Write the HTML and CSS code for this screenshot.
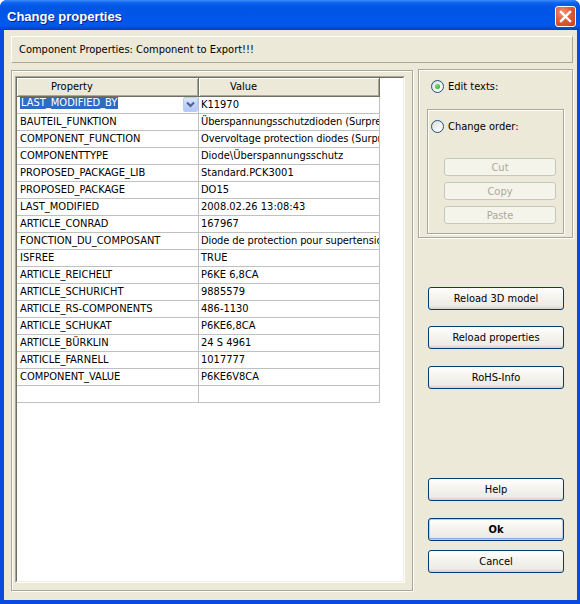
FILE: index.html
```html
<!DOCTYPE html>
<html>
<head>
<meta charset="utf-8">
<title>Change properties</title>
<link rel="stylesheet" href="styles.css">
</head>
<body>
<div class="window">
  <div class="titlebar">
    <span class="title">Change properties</span>
    <div class="close">
      <svg width="13" height="13" viewBox="0 0 13 13"><path d="M2 2 L11 11 M11 2 L2 11" stroke="#fff" stroke-width="2.4" stroke-linecap="square"/></svg>
    </div>
  </div>
  <div class="client">
    <div class="caption-panel">Component Properties: Component to Export!!!</div>
    <div class="main">
      <div class="grid-frame">
        <div class="grid">
          <div class="grid-inner">
            <div class="row head">
              <div class="hcell prop">Property</div>
              <div class="hcell val">Value</div>
            </div>
            <div class="row">
              <div class="cell editing">
                <span class="sel">LAST_MODIFIED_BY</span>
                <span class="drop"><svg width="9" height="7" viewBox="0 0 9 7"><path d="M1 1.5 L4.5 5 L8 1.5" fill="none" stroke="#4D6185" stroke-width="2"/></svg></span>
              </div>
              <div class="cell v">K11970</div>
            </div>
            <div class="row"><div class="cell">BAUTEIL_FUNKTION</div><div class="cell v tight">Überspannungsschutzdioden (Surpres</div></div>
            <div class="row"><div class="cell">COMPONENT_FUNCTION</div><div class="cell v tight">Overvoltage protection diodes (Surpre</div></div>
            <div class="row"><div class="cell">COMPONENTTYPE</div><div class="cell v">Diode\Überspannungsschutz</div></div>
            <div class="row"><div class="cell">PROPOSED_PACKAGE_LIB</div><div class="cell v">Standard.PCK3001</div></div>
            <div class="row"><div class="cell">PROPOSED_PACKAGE</div><div class="cell v">DO15</div></div>
            <div class="row"><div class="cell">LAST_MODIFIED</div><div class="cell v">2008.02.26 13:08:43</div></div>
            <div class="row"><div class="cell">ARTICLE_CONRAD</div><div class="cell v">167967</div></div>
            <div class="row"><div class="cell">FONCTION_DU_COMPOSANT</div><div class="cell v tight">Diode de protection pour supertensior</div></div>
            <div class="row"><div class="cell">ISFREE</div><div class="cell v">TRUE</div></div>
            <div class="row"><div class="cell">ARTICLE_REICHELT</div><div class="cell v">P6KE 6,8CA</div></div>
            <div class="row"><div class="cell">ARTICLE_SCHURICHT</div><div class="cell v">9885579</div></div>
            <div class="row"><div class="cell">ARTICLE_RS-COMPONENTS</div><div class="cell v">486-1130</div></div>
            <div class="row"><div class="cell">ARTICLE_SCHUKAT</div><div class="cell v">P6KE6,8CA</div></div>
            <div class="row"><div class="cell">ARTICLE_BÜRKLIN</div><div class="cell v">24 S 4961</div></div>
            <div class="row"><div class="cell">ARTICLE_FARNELL</div><div class="cell v">1017777</div></div>
            <div class="row"><div class="cell">COMPONENT_VALUE</div><div class="cell v">P6KE6V8CA</div></div>
            <div class="row"><div class="cell"></div><div class="cell v"></div></div>
          </div>
        </div>
      </div>
      <div class="side">
        <div class="mode-group">
          <div class="radio first"><span class="knob checked"></span><span>Edit texts:</span></div>
          <div class="order-group">
            <div class="radio"><span class="knob"></span><span>Change order:</span></div>
            <div class="sbtn first-s">Cut</div>
            <div class="sbtn">Copy</div>
            <div class="sbtn">Paste</div>
          </div>
        </div>
        <button class="btn b-reload3d">Reload 3D model</button>
        <button class="btn b-reloadprops">Reload properties</button>
        <button class="btn b-rohs">RoHS-Info</button>
        <button class="btn b-help">Help</button>
        <button class="btn b-ok">Ok</button>
        <button class="btn b-cancel">Cancel</button>
      </div>
    </div>
  </div>
</div>
</body>
</html>
```
FILE: styles.css
```css
* { box-sizing: border-box; }
html, body { margin: 0; padding: 0; background: #ffffff; }
body {
  width: 580px;
  height: 604px;
  overflow: hidden;
  font-family: "DejaVu Sans Condensed", "Liberation Sans", sans-serif;
  font-size: 11px;
  color: #000;
}
.window {
  width: 580px;
  height: 604px;
  display: flex;
  flex-direction: column;
  background: #0A4BDF;
  border-radius: 7px 7px 0 0;
  overflow: hidden;
}
.titlebar {
  height: 30px;
  flex: none;
  display: flex;
  align-items: center;
  justify-content: space-between;
  padding: 0 4px 0 7px;
  background: linear-gradient(180deg, #3D8DF8 0, #0A61F0 3px, #0055E5 7px, #0056E8 50%, #0059EC 85%, #0047CC 96%, #003EB8 100%);
}
.title {
  color: #fff;
  font-family: "Liberation Sans", sans-serif;
  font-weight: bold;
  font-size: 13px;
  margin-top: 2px;
  text-shadow: 1px 1px #0A1E8C;
}
.close {
  width: 21px;
  height: 21px;
  margin-top: 2px;
  border: 1px solid #fff;
  border-radius: 3px;
  background: radial-gradient(circle at 35% 30%, #F0987A 0, #E35A35 45%, #C93E1B 100%);
  display: flex;
  align-items: center;
  justify-content: center;
}
.client {
  flex: 1;
  margin: 0 3px 4px 4px;
  background: #ECE9D8;
  padding: 6px 4px 0 7px;
  display: flex;
  flex-direction: column;
}
.caption-panel {
  height: 27px;
  border: 1px solid;
  border-color: #fff #ACA899 #ACA899 #fff;
  padding-left: 7px;
  line-height: 25px;
}
.main {
  display: flex;
  gap: 5px;
  margin-top: 6px;
  align-items: flex-start;
}
.grid-frame {
  width: 402px;
  height: 521px;
  margin-top: 1px;
  border: 1px solid #ACA899;
  box-shadow: inset 1px 1px #fff, 1px 1px #fff;
  padding: 5px 7px 7px 3px;
}
.grid {
  width: 390px;
  height: 507px;
  border: 1px solid;
  border-color: #ACA899 #fff #fff #ACA899;
}
.grid-inner {
  height: 100%;
  border: 1px solid;
  border-color: #716F64 #F1EFE2 #F1EFE2 #716F64;
  background: #fff;
}
.row {
  display: grid;
  grid-template-columns: 182px 181px;
  height: 17px;
}
.row.head { height: 19px; }
.hcell {
  background: #ECE9D8;
  border-right: 1px solid #716F64;
  border-bottom: 1px solid #716F64;
  box-shadow: inset 1px 1px #fff, inset -1px -1px #ACA899;
  line-height: 18px;
  white-space: nowrap;
}
.hcell.prop { padding-left: 34px; }
.hcell.val { padding-left: 31px; }
.cell {
  border-right: 1px solid #C0C0C0;
  border-bottom: 1px solid #C0C0C0;
  padding-left: 3px;
  line-height: 16px;
  white-space: nowrap;
  overflow: hidden;
}
.cell.v { padding-left: 2px; }
.cell.tight { letter-spacing: -0.1px; }
.cell.editing {
  display: flex;
  justify-content: space-between;
  align-items: flex-start;
  padding-right: 0;
}
.sel {
  background: #316AC5;
  color: #fff;
  line-height: 12px;
  margin-top: 0;
  padding: 0 1px;
}
.drop {
  width: 15px;
  height: 15px;
  border: 1px solid #B9CCF8;
  border-radius: 2px;
  background: linear-gradient(180deg, #DCE6FD 0, #C1D3FB 50%, #B2C7F8 100%);
  display: flex;
  align-items: center;
  justify-content: center;
}
.side {
  width: 155px;
  display: flex;
  flex-direction: column;
}
.mode-group {
  height: 169px;
  border: 1px solid #ACA899;
  box-shadow: inset 1px 1px #fff, 1px 1px #fff;
  padding: 10px 8px 0 8px;
}
.radio {
  display: flex;
  align-items: center;
  gap: 4px;
  height: 13px;
}
.radio.first { margin-left: 4px; }
.knob {
  width: 13px;
  height: 13px;
  border-radius: 50%;
  border: 1px solid #1C5180;
  background: linear-gradient(135deg, #DCDCD7 0, #F4F4F1 60%, #fff 100%);
  display: flex;
  align-items: center;
  justify-content: center;
}
.knob.checked::after {
  content: "";
  width: 5px;
  height: 5px;
  border-radius: 50%;
  background: radial-gradient(circle at 35% 35%, #7AE27A, #21A121);
}
.order-group {
  margin-top: 16px;
  width: 137px;
  height: 125px;
  border: 1px solid #ACA899;
  box-shadow: inset 1px 1px #fff, 1px 1px #fff;
  padding: 10px 0 0 3px;
}
.sbtn {
  width: 112px;
  height: 18px;
  margin-left: 13px;
  margin-top: 6px;
  border: 1px solid #C9C7BA;
  border-radius: 3px;
  background: #F5F4EA;
  color: #ACA899;
  display: flex;
  align-items: center;
  justify-content: center;
}
.sbtn.first-s { margin-top: 25px; }
.btn {
  width: 136px;
  height: 23px;
  margin-left: 10px;
  padding: 0;
  border: 1px solid #003C74;
  border-radius: 3px;
  background: linear-gradient(180deg, #fff 0, #F5F4EF 40%, #ECEBE6 85%, #D6D0C5 100%);
  font: inherit;
  color: #000;
  display: flex;
  align-items: center;
  justify-content: center;
}
.b-reload3d { margin-top: 49px; }
.b-reloadprops { margin-top: 16px; }
.b-rohs { margin-top: 17px; }
.b-help { margin-top: 89px; }
.b-ok {
  margin-top: 17px;
  font-weight: bold;
  box-shadow: inset 0 0 0 1px #B6CDF7, inset 0 -1px 0 1px #8EAAE8;
}
.b-cancel { margin-top: 9px; }
```
